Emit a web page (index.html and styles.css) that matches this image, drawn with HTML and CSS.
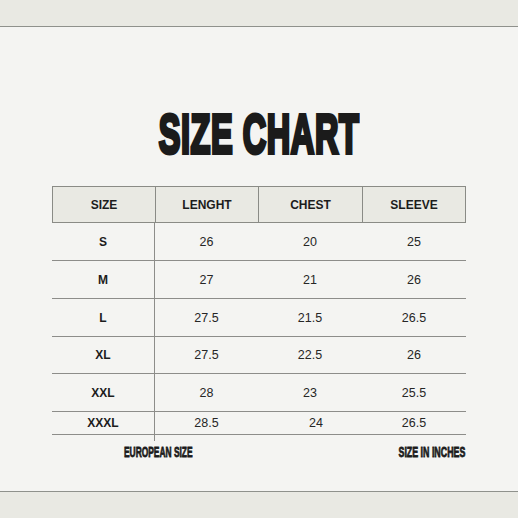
FILE: index.html
```html
<!DOCTYPE html>
<html>
<head>
<meta charset="utf-8">
<link rel="stylesheet" href="styles.css">
</head>
<body>
<div class="band band-top"></div>
<main class="main">
  <h1 class="title">SIZE CHART</h1>
  <div class="chart">
    <div class="head">
      <div class="hcell">SIZE</div>
      <div class="hcell">LENGHT</div>
      <div class="hcell">CHEST</div>
      <div class="hcell">SLEEVE</div>
    </div>
    <div class="row"><div class="label">S</div><div class="val">26</div><div class="val">20</div><div class="val">25</div></div>
    <div class="row"><div class="label">M</div><div class="val">27</div><div class="val">21</div><div class="val">26</div></div>
    <div class="row"><div class="label">L</div><div class="val">27.5</div><div class="val">21.5</div><div class="val">26.5</div></div>
    <div class="row r37"><div class="label">XL</div><div class="val">27.5</div><div class="val">22.5</div><div class="val">26</div></div>
    <div class="row"><div class="label">XXL</div><div class="val">28</div><div class="val">23</div><div class="val">25.5</div></div>
    <div class="row last"><div class="label">XXXL</div><div class="val">28.5</div><div class="val shift">24</div><div class="val">26.5</div></div>
  </div>
  <div class="foot">
    <span class="note note-left">EUROPEAN SIZE</span>
    <span class="note note-right">SIZE IN INCHES</span>
  </div>
</main>
<div class="band band-bottom"></div>
</body>
</html>
```
FILE: styles.css
```css
html, body {
  margin: 0;
  padding: 0;
}
body {
  width: 518px;
  height: 518px;
  overflow: hidden;
  font-family: "Liberation Sans", Arial, sans-serif;
  background: #f4f4f2;
}
.band {
  height: 26px;
  background: #e9e9e3;
}
.band-top {
  border-bottom: 1px solid #8f918c;
}
.band-bottom {
  border-top: 1px solid #8f918c;
}
.main {
  height: 464px;
  box-sizing: border-box;
  padding-top: 79px;
  background: #f4f4f2;
  display: flex;
  flex-direction: column;
  align-items: center;
}
.title {
  margin: 0;
  height: 56px;
  font-size: 56px;
  line-height: 56px;
  font-weight: 700;
  color: #1b1b1b;
  -webkit-text-stroke: 4px #1b1b1b;
  letter-spacing: 1px;
  white-space: nowrap;
  transform: scaleX(0.58);
  transform-origin: center;
}
.chart {
  margin-top: 24px;
  width: 414px;
}
.head {
  display: grid;
  grid-template-columns: 102px 103px 104px 103px;
  height: 37px;
  box-sizing: border-box;
  border: 1px solid #8a8b86;
  background: #e9e9e3;
}
.hcell {
  display: flex;
  align-items: center;
  justify-content: center;
  font-size: 12px;
  font-weight: 700;
  color: #1c1c1c;
  border-left: 1px solid #8a8b86;
}
.hcell:first-child {
  border-left: none;
}
.row {
  display: grid;
  grid-template-columns: 103px 103px 104px 104px;
  height: 38px;
  box-sizing: border-box;
  border-bottom: 1px solid #8d8d8a;
}
.row.r37 {
  height: 37px;
}
.row.last {
  height: 23px;
}
.label {
  position: relative;
  display: flex;
  align-items: center;
  justify-content: center;
  font-size: 12px;
  font-weight: 700;
  color: #1c1c1c;
  border-right: 1px solid #8d8d8a;
}
.row.last .label::after {
  content: "";
  position: absolute;
  right: -1px;
  bottom: -7px;
  width: 1px;
  height: 7px;
  background: #8d8d8a;
}
.val {
  display: flex;
  align-items: center;
  justify-content: center;
  font-size: 12.5px;
  color: #262626;
}
.val.shift {
  padding-left: 12px;
}
.foot {
  width: 414px;
  margin-top: 9px;
  height: 15px;
  display: flex;
  justify-content: space-between;
}
.note {
  display: inline-block;
  font-size: 15px;
  line-height: 15px;
  font-weight: 700;
  color: #1b1b1b;
  -webkit-text-stroke: 0.8px #1b1b1b;
  white-space: nowrap;
}
.note-left {
  margin-left: 45px;
  transform: scaleX(0.56);
  transform-origin: center;
}
.note-right {
  margin-right: 1px;
  transform: scaleX(0.59);
  transform-origin: right center;
}
```
